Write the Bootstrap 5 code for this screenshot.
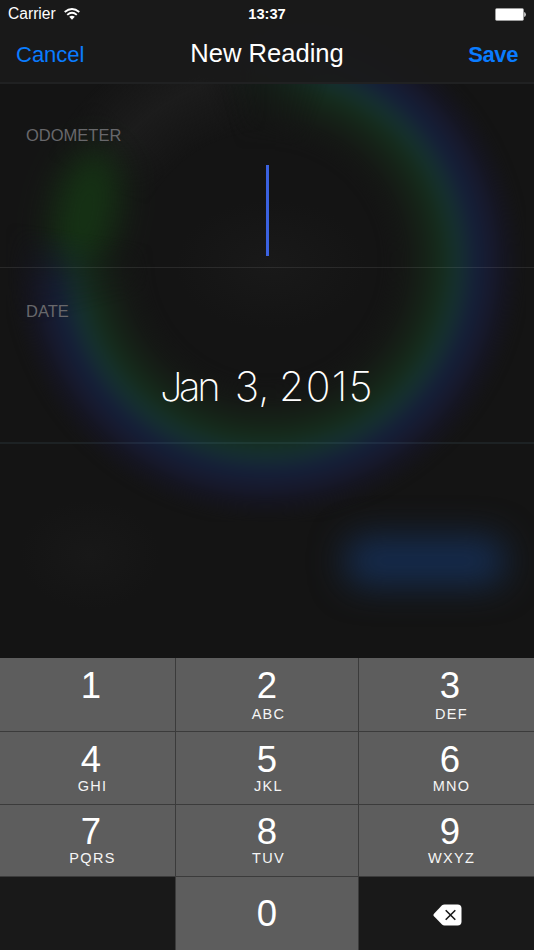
<!DOCTYPE html>
<html lang="en">
<head>
<meta charset="utf-8">
<meta name="viewport" content="width=device-width, initial-scale=1">
<title>New Reading</title>
<link href="https://cdn.jsdelivr.net/npm/bootstrap@5.3.0/dist/css/bootstrap.min.css" rel="stylesheet">
<style>
body{background:#141414;color:#fff;font-family:"Liberation Sans",Arial,sans-serif;-webkit-font-smoothing:antialiased}
.screen{width:534px;height:950px;isolation:isolate}
.backdrop-art{z-index:-1}
.backdrop-art div{position:absolute}
.ring{left:6px;top:2px;width:520px;height:520px;filter:blur(5px);
 background:radial-gradient(circle closest-side,transparent 46%,#151815 54%,#152117 61%,#152b1c 67%,#15302a 72%,#152b33 76%,#151f38 81%,#16192d 87%,#151520 92%,#14141400 99%);
 -webkit-mask-image:conic-gradient(from 0deg,rgba(0,0,0,.35) 0deg,#000 20deg,#000 254deg,rgba(0,0,0,.75) 264deg,transparent 279deg,transparent 345deg,rgba(0,0,0,.35) 360deg);
 mask-image:conic-gradient(from 0deg,rgba(0,0,0,.35) 0deg,#000 20deg,#000 254deg,rgba(0,0,0,.75) 264deg,transparent 279deg,transparent 345deg,rgba(0,0,0,.35) 360deg)}
.green-end{left:54px;top:147px;width:64px;height:130px;border-radius:50%;background:#153214;filter:blur(17px);transform:rotate(12deg)}
.grey-arc{left:6px;top:2px;width:520px;height:520px;
 background:radial-gradient(circle closest-side,transparent 50%,#1c1c1c 72%,transparent 94%);
 -webkit-mask-image:conic-gradient(transparent 295deg,#000 315deg,#000 340deg,transparent 360deg);
 mask-image:conic-gradient(transparent 295deg,#000 315deg,#000 340deg,transparent 360deg)}
.glow-center{left:176px;top:200px;width:190px;height:130px;background:radial-gradient(closest-side,#191919,transparent)}
.glow-left{left:20px;top:500px;width:140px;height:110px;background:radial-gradient(closest-side,#181818,transparent)}
.glow-blue{left:345px;top:536px;width:160px;height:50px;border-radius:20px;background:#152b4d;filter:blur(17px)}
.top-area{height:84px;background:rgba(26,26,26,.93);border-bottom:2px solid #202122}
.status{height:28px;font-size:15.6px;line-height:28px}
.status span{white-space:nowrap}
.clock{font-weight:700;font-size:14.7px}
.titlebar{height:54px;font-size:22px;line-height:53px;padding:0 16px}
.titlebar a{color:#0a7cff;text-decoration:none}
.titlebar a.save-link{letter-spacing:-.4px}
.titlebar h1{font-size:25.6px;line-height:50px;font-weight:400;margin:0}
.side{flex:1 1 0}
.field-row{padding:0 26px}
.odo{height:184px;border-bottom:1px solid rgba(255,255,255,.09)}
.dat{height:176px;border-bottom:2px solid rgba(120,170,190,.10)}
.field-label{color:#68686b;font-size:16.5px;line-height:20px}
.odo .field-label{padding-top:41px}
.dat .field-label{padding-top:33px}
.caret{width:3px;height:91px;margin:20px auto 0;background:#3b62e0}
.date-value{font-family:Inter,"Helvetica Neue",sans-serif;font-weight:200;font-size:41px;line-height:50px;margin:40px 110px 0 134px;white-space:nowrap}
.date-value .mon{letter-spacing:-3.4px;font-size:40px;margin-right:6px}
.date-value .day{margin-right:-2px}
.date-value .yr{letter-spacing:1.3px}
.keypad{display:grid;grid-template-columns:175px 182px 175px;grid-template-rows:73px 72px 71px 73px;gap:1px;height:292px;background:#3b3b3b}
.key{background:#5d5d5d;color:#fff;border:0;padding:0;display:flex;flex-direction:column;align-items:center}
.key b{font-weight:400;font-size:36.5px;line-height:40px;margin-top:8px}
.key small{font-size:14.5px;line-height:16px;letter-spacing:1.3px;padding-left:3px;color:#f5f5f5}
.r2 small,.r3 small{margin-top:-2px}
.r3 b{margin-top:7px}
.key.dark{background:#191919;justify-content:center}
.left-col{padding-left:7px}
.right-col{padding-left:7px}
.zero b{margin:1px 0 0}
.key svg{margin:3px 0 0 2px}
</style>
<script src="https://cdn.jsdelivr.net/npm/bootstrap@5.3.0/dist/js/bootstrap.bundle.min.js"></script>
</head>
<body>
<div class="screen d-flex flex-column position-relative overflow-hidden">
  <div class="backdrop-art position-absolute top-0 start-0 w-100 h-100" aria-hidden="true">
    <div class="grey-arc"></div><div class="green-end"></div><div class="ring"></div>
    <div class="glow-center"></div><div class="glow-left"></div><div class="glow-blue"></div>
  </div>
  <header class="top-area">
    <div class="status d-flex align-items-center px-2">
      <div class="side d-flex align-items-center gap-2">
        <span>Carrier</span>
        <svg width="16" height="12" viewBox="0 0 16 12" fill="none" stroke="#fff" stroke-width="1.9"><path d="M.7 4.1Q8-2 15.3 4.1M3.2 6.9Q8 2.8 12.8 6.9"/><path d="M5.2 8.8Q8 6.5 10.8 8.8L8 11.7Z" fill="#fff" stroke="none"/></svg>
      </div>
      <span class="clock">13:37</span>
      <div class="side d-flex justify-content-end align-items-center">
        <svg width="31" height="13" viewBox="0 0 31 13"><rect x=".5" y=".5" width="28" height="12" rx="1.3" fill="#fff" stroke="#aaa" stroke-width=".6"/><path d="M29.3 4.2h.7q1.4 2.3 0 4.6h-.7z" fill="#fff"/></svg>
      </div>
    </div>
    <nav class="titlebar d-flex">
      <div class="side"><a href="#">Cancel</a></div>
      <h1>New Reading</h1>
      <div class="side text-end"><a href="#" class="save-link fw-bold">Save</a></div>
    </nav>
  </header>
  <main class="flex-grow-1">
    <section class="field-row odo"><div class="field-label">ODOMETER</div><div class="caret"></div></section>
    <section class="field-row dat"><div class="field-label">DATE</div><div class="date-value"><span class="mon">Jan</span> <span class="day">3,</span> <span class="yr">2015</span></div></section>
  </main>
  <div class="keypad">
    <button class="key left-col"><b>1</b></button>
    <button class="key"><b>2</b><small>ABC</small></button>
    <button class="key right-col"><b>3</b><small>DEF</small></button>
    <button class="key r2 left-col"><b>4</b><small>GHI</small></button>
    <button class="key r2"><b>5</b><small>JKL</small></button>
    <button class="key r2 right-col"><b>6</b><small>MNO</small></button>
    <button class="key r3 left-col"><b>7</b><small>PQRS</small></button>
    <button class="key r3"><b>8</b><small>TUV</small></button>
    <button class="key r3 right-col"><b>9</b><small>WXYZ</small></button>
    <div class="key dark"></div>
    <button class="key zero justify-content-center"><b>0</b></button>
    <button class="key dark" aria-label="Delete">
      <svg width="29" height="22" viewBox="0 0 29 22"><path d="M9 1.2Q10 .5 11.5 .5H24.5Q28.5 .5 28.5 4.5V17.5Q28.5 21.5 24.5 21.5H11.5Q10 21.5 9 20.6L1 12.3Q-.2 11 1 9.7Z" fill="#fff"/><path d="M12.7 6.2l9.6 9.6M22.3 6.2l-9.6 9.6" stroke="#191919" stroke-width="1.6"/></svg>
    </button>
  </div>
</div>
</body>
</html>
